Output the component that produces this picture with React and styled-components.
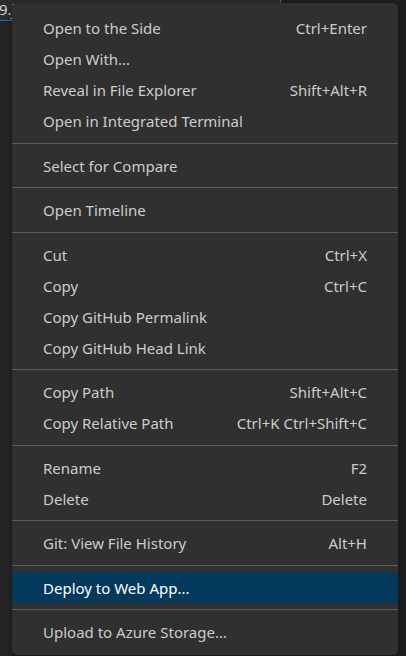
import React from "react";
import styled, { createGlobalStyle } from "styled-components";

const GlobalStyle = createGlobalStyle`
  html, body {
    margin: 0;
    padding: 0;
    background: #1e1e1e;
  }
  * {
    box-sizing: border-box;
  }
`;

const Screen = styled.div`
  position: relative;
  width: 406px;
  height: 656px;
  overflow: hidden;
  background: #1e1e1e;
  font-family: "Segoe UI", "Noto Sans", "Open Sans", sans-serif;
`;

const TabBar = styled.div`
  display: flex;
  height: 21px;
  background: #1e1e1e;
`;

const Tab = styled.div`
  width: 281px;
  height: 21px;
  background: #2d2d2d;
  border-right: 1px solid #0078d4;
  border-bottom: 1px solid #0078d4;
  color: #d4d4d4;
  font-size: 15px;
  line-height: 18px;
  overflow: hidden;
  white-space: nowrap;
  text-indent: -1px;
`;

const Sidebar = styled.div`
  width: 12px;
  height: 635px;
  background: #252526;
`;

const Menu = styled.div`
  position: absolute;
  left: 12px;
  top: 3px;
  width: 386px;
  height: 652px;
  padding: 9.5px 0;
  background: #303030;
  border-radius: 5px;
  box-shadow: 0 2px 8px rgba(0, 0, 0, 0.36);
`;

const Item = styled.div`
  display: flex;
  align-items: center;
  justify-content: space-between;
  height: 31px;
  padding: 0 31px;
  font-size: 15px;
  color: ${(p) => (p.$active ? "#ffffff" : "#cccccc")};
  background: ${(p) => (p.$active ? "#04395e" : "transparent")};
  white-space: nowrap;
`;

const Shortcut = styled.span`
  margin-left: 24px;
`;

const Separator = styled.div`
  height: 13.5px;
  display: flex;
  align-items: center;

  &::after {
    content: "";
    display: block;
    width: 100%;
    height: 1px;
    background: #5c5c5c;
  }
`;

const groups = [
  [
    ["Open to the Side", "Ctrl+Enter"],
    ["Open With...", ""],
    ["Reveal in File Explorer", "Shift+Alt+R"],
    ["Open in Integrated Terminal", ""],
  ],
  [["Select for Compare", ""]],
  [["Open Timeline", ""]],
  [
    ["Cut", "Ctrl+X"],
    ["Copy", "Ctrl+C"],
    ["Copy GitHub Permalink", ""],
    ["Copy GitHub Head Link", ""],
  ],
  [
    ["Copy Path", "Shift+Alt+C"],
    ["Copy Relative Path", "Ctrl+K Ctrl+Shift+C"],
  ],
  [
    ["Rename", "F2"],
    ["Delete", "Delete"],
  ],
  [["Git: View File History", "Alt+H"]],
  [["Deploy to Web App...", "", true]],
  [["Upload to Azure Storage...", ""]],
];

const App = () => {
  return (
    <Screen>
      <GlobalStyle />
      <TabBar>
        <Tab>9.js</Tab>
      </TabBar>
      <Sidebar />
      <Menu>
        {groups.map((group, gi) => (
          <React.Fragment key={gi}>
            {gi > 0 && <Separator />}
            {group.map(([label, keys, active]) => (
              <Item key={label} $active={active}>
                <span>{label}</span>
                {keys && <Shortcut>{keys}</Shortcut>}
              </Item>
            ))}
          </React.Fragment>
        ))}
      </Menu>
    </Screen>
  );
};

export default App;
